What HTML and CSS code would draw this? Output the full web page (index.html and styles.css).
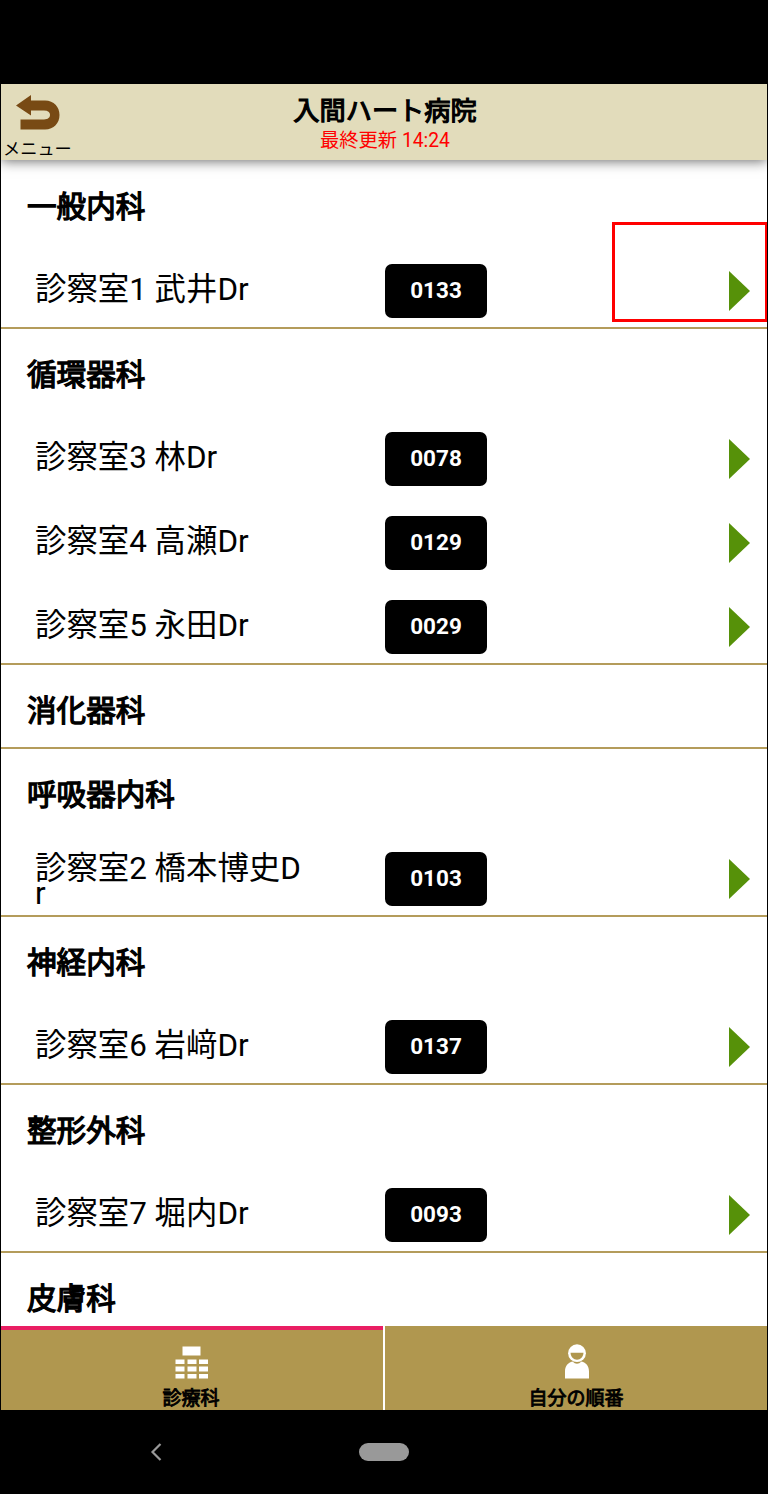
FILE: index.html
```html
<!DOCTYPE html>
<html lang="ja">
<head>
    <meta charset="UTF-8">
    <meta name="viewport" content="width=device-width, initial-scale=1.0">
    <title>入間ハート病院</title>
    <link rel="stylesheet" href="styles.css">
</head>
<body>
    <div class="screen">
        <header class="header">
            <a class="back">
                <svg class="back-icon" width="44" height="36" viewBox="0 0 44 36">
                    <path d="M0 10.500L15 0V5.500H29C38 5.500 43.500 12 43.500 20S38 34.500 29 34.500H4.500V24.500H28C32 24.500 34 22.500 34 19.800S32 15.500 28 15.500H15V20.500Z" fill="#784a14"/>
                </svg>
                <span class="back-label">メニュー</span>
            </a>
            <h1 class="title">入間ハート病院</h1>
            <p class="updated">最終更新 14:24</p>
        </header>
        <main class="list">
            <section class="dept">
                <h2>一般内科</h2>
                <div class="room marked"><span class="name">診察室1 武井Dr</span><span class="number">0133</span><span class="arrow"></span></div>
            </section>
            <section class="dept">
                <h2>循環器科</h2>
                <div class="room"><span class="name">診察室3 林Dr</span><span class="number">0078</span><span class="arrow"></span></div>
                <div class="room"><span class="name">診察室4 高瀬Dr</span><span class="number">0129</span><span class="arrow"></span></div>
                <div class="room"><span class="name">診察室5 永田Dr</span><span class="number">0029</span><span class="arrow"></span></div>
            </section>
            <section class="dept">
                <h2>消化器科</h2>
            </section>
            <section class="dept">
                <h2>呼吸器内科</h2>
                <div class="room"><span class="name long">診察室2 橋本博史Dr</span><span class="number">0103</span><span class="arrow"></span></div>
            </section>
            <section class="dept">
                <h2>神経内科</h2>
                <div class="room"><span class="name">診察室6 岩﨑Dr</span><span class="number">0137</span><span class="arrow"></span></div>
            </section>
            <section class="dept">
                <h2>整形外科</h2>
                <div class="room"><span class="name">診察室7 堀内Dr</span><span class="number">0093</span><span class="arrow"></span></div>
            </section>
            <section class="dept">
                <h2>皮膚科</h2>
            </section>
        </main>
        <nav class="tabs">
            <a class="tab active">
                <svg width="34" height="36" viewBox="0 0 34 36" fill="#fff">
                    <path d="M7.500 2.500h18v9h-18zM.5 15.500h9v4.500h-9zM12.500 15.500h9v4.500h-9zM24 15.500h9v4.500h-9zM.5 22.500h9v5h-9zM12.500 22.500h9v5h-9zM24 22.500h9v5h-9zM.5 30h9v4.500h-9zM12.500 30h9v4.500h-9zM24 30h9v4.500h-9z"/>
                </svg>
                <span>診療科</span>
            </a>
            <a class="tab">
                <svg width="34" height="36" viewBox="0 0 34 36">
                    <path d="M6 34.500V27.500C6 22 9 18.500 13.500 17.500Q18 22 22.500 17.500C27 18.500 30 22 30 27.500V34.500Z" fill="#fff"/>
                    <circle cx="18" cy="9.200" r="8.900" fill="#fff"/>
                    <path d="M11.500 8.800H24.500C24.300 13 21.500 15.700 18 15.700S11.700 13 11.500 8.800Z" fill="#b0974f"/>
                </svg>
                <span>自分の順番</span>
            </a>
        </nav>
    </div>
    <div class="navbar">
        <svg class="nav-back" width="12" height="18" viewBox="0 0 12 18">
            <path d="M10.500 1L2.500 9L10.500 17" fill="none" stroke="#999" stroke-width="2.200"/>
        </svg>
        <span class="home"></span>
    </div>
</body>
</html>
```
FILE: styles.css
```css
* {
    box-sizing: border-box;
}
body {
    margin: 0;
    height: 1494px;
    padding-top: 84px;
    overflow: hidden;
    background-color: #000;
    color: #000;
    font-family: Roboto, "Noto Sans CJK JP", sans-serif;
}
h1, h2, p {
    margin: 0;
}
.screen {
    display: flex;
    flex-direction: column;
    width: 766px;
    height: 1326px;
    margin-left: 1px;
    background-color: #fff;
}
.header {
    position: relative;
    flex: none;
    height: 76px;
    margin-bottom: 1px;
    padding: 10px 0 0 2px;
    background-color: #e2dcbb;
    box-shadow: 0 1px 12px rgba(0, 0, 0, 0.6);
    clip-path: inset(0 0 -20px 0);
    text-align: center;
}
.back {
    position: absolute;
    left: 2px;
    top: 11px;
    display: flex;
    flex-direction: column;
    align-items: flex-start;
}
.back-icon {
    margin-left: 13px;
}
.back-label {
    margin-top: 7px;
    font-size: 17.200px;
    line-height: 22px;
}
.title {
    font-size: 26.200px;
    font-weight: 400;
    line-height: 34px;
    -webkit-text-stroke: 1.200px #000;
}
.updated {
    color: #f00;
    font-size: 19.300px;
    line-height: 25px;
}
.list {
    flex: 1;
    min-height: 0;
    overflow: hidden;
}
.dept {
    border-bottom: 2px solid #b49c5b;
}
.dept h2 {
    height: 84px;
    padding: 4px 0 0 26px;
    font-size: 29.600px;
    font-weight: 400;
    line-height: 84px;
    -webkit-text-stroke: 1.300px #000;
}
.dept h2:last-child,
.room:last-child {
    margin-bottom: -2px;
}
.room {
    position: relative;
    display: flex;
    align-items: center;
    height: 84px;
    padding: 7px 17px 0 34px;
}
.name {
    width: 270px;
    margin-right: 80px;
    padding-bottom: 2px;
    font-size: 31.400px;
    line-height: 25px;
    word-break: break-all;
}
.long {
    padding: 5px 0 0;
}
.number {
    width: 102px;
    height: 54px;
    border-radius: 7px;
    background-color: #000;
    color: #fff;
    font-size: 22.500px;
    font-weight: 700;
    line-height: 53px;
    text-align: center;
}
.arrow {
    width: 21px;
    height: 40px;
    margin-top: 1px;
    margin-left: auto;
    background-color: #569109;
    clip-path: polygon(0 0, 100% 50%, 0 100%);
}
.marked::after {
    content: "";
    position: absolute;
    left: 611px;
    top: -23px;
    width: 150px;
    height: 94px;
    border: 3px solid #f00;
}
.tabs {
    display: flex;
    gap: 2px;
    height: 84px;
    flex: none;
}
.tab {
    flex: 1;
    display: flex;
    flex-direction: column;
    align-items: center;
    padding-top: 18px;
    background-color: #b0974f;
    font-size: 19px;
    line-height: 28px;
    -webkit-text-stroke: 0.900px #000;
}
.tab svg {
    flex: none;
    margin-bottom: 5px;
}
.active {
    padding-top: 14px;
    border-top: 4px solid #e91e63;
}
.active span {
    margin-right: 2px;
}
.navbar {
    display: flex;
    align-items: center;
    height: 84px;
    padding-left: 150px;
}
.home {
    width: 50px;
    height: 18px;
    margin-left: 197px;
    border-radius: 9px;
    background-color: #999;
}
```
